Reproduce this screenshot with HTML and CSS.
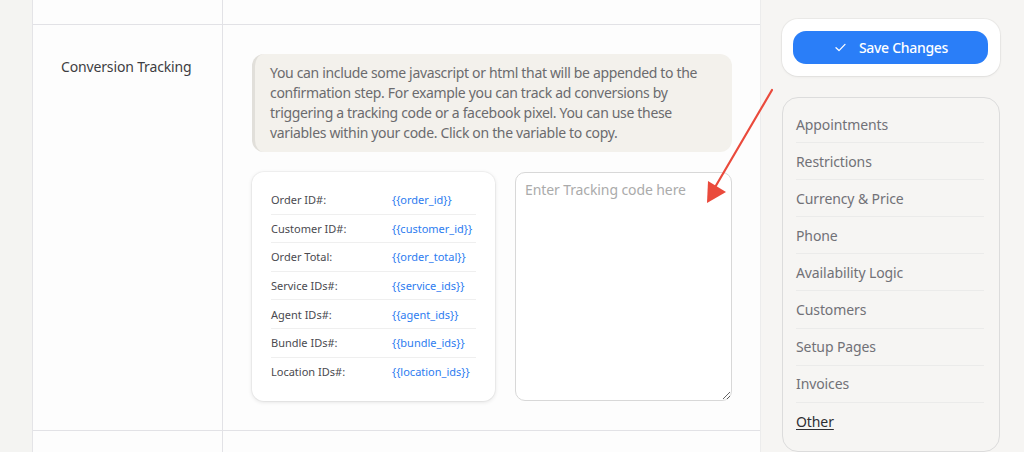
FILE: index.html
```html
<!DOCTYPE html>
<html lang="en">
<head>
<meta charset="utf-8">
<title>Settings - Other</title>
<link rel="stylesheet" href="styles.css">
</head>
<body>
<div class="page">
  <div class="strip"></div>
  <main class="main">
    <div class="cell cell-label row-top"></div>
    <div class="cell cell-content row-top"></div>

    <div class="cell cell-label">
      <div class="label">Conversion Tracking</div>
    </div>
    <div class="cell cell-content content-main">
      <div class="info">You can include some javascript or html that will be appended to the confirmation step. For example you can track ad conversions by triggering a tracking code or a facebook pixel. You can use these variables within your code. Click on the variable to copy.</div>
      <div class="tracking">
        <div class="vars">
          <div class="var-row"><span class="var-name">Order ID#:</span><span class="var-code">{{order_id}}</span></div>
          <div class="var-row"><span class="var-name">Customer ID#:</span><span class="var-code">{{customer_id}}</span></div>
          <div class="var-row"><span class="var-name">Order Total:</span><span class="var-code">{{order_total}}</span></div>
          <div class="var-row"><span class="var-name">Service IDs#:</span><span class="var-code">{{service_ids}}</span></div>
          <div class="var-row"><span class="var-name">Agent IDs#:</span><span class="var-code">{{agent_ids}}</span></div>
          <div class="var-row"><span class="var-name">Bundle IDs#:</span><span class="var-code">{{bundle_ids}}</span></div>
          <div class="var-row"><span class="var-name">Location IDs#:</span><span class="var-code">{{location_ids}}</span></div>
        </div>
        <textarea class="code-input" placeholder="Enter Tracking code here"></textarea>
      </div>
    </div>

    <div class="cell cell-label row-bottom"></div>
    <div class="cell cell-content row-bottom"></div>
  </main>
  <aside class="side">
    <div class="save-card">
      <button class="save-btn" type="button">
        <svg class="check" width="11" height="9" viewBox="0 0 11 9" aria-hidden="true"><path d="M1 4.8 L4 7.6 L10 1.4" fill="none" stroke="#ffffff" stroke-width="1.3" stroke-linecap="round" stroke-linejoin="round"/></svg>
        <span>Save Changes</span>
      </button>
    </div>
    <nav class="menu">
      <a class="menu-item">Appointments</a>
      <a class="menu-item">Restrictions</a>
      <a class="menu-item">Currency &amp; Price</a>
      <a class="menu-item">Phone</a>
      <a class="menu-item">Availability Logic</a>
      <a class="menu-item">Customers</a>
      <a class="menu-item">Setup Pages</a>
      <a class="menu-item">Invoices</a>
      <a class="menu-item active">Other</a>
    </nav>
  </aside>
</div>
<svg class="annot" width="1024" height="452" viewBox="0 0 1024 452" aria-hidden="true">
  <line x1="772" y1="90" x2="714" y2="189" stroke="#ea4a3c" stroke-width="2.2" stroke-linecap="round"/>
  <polygon points="707,203 708,181 726,192" fill="#ea4a3c"/>
</svg>
</body>
</html>
```
FILE: styles.css
```css
* { box-sizing: border-box; }
html, body { margin: 0; padding: 0; }
body {
  width: 1024px;
  height: 452px;
  overflow: hidden;
  font-family: "Noto Sans", "Open Sans", sans-serif;
  background: #f6f5f3;
  position: relative;
}
.page {
  display: flex;
  height: 452px;
}
.strip {
  width: 32px;
  flex: none;
  background: #f4f4f2;
}
.main {
  width: 729px;
  flex: none;
  background: #fdfdfd;
  border-left: 1px solid #e4e4e7;
  border-right: 1px solid #ececec;
  display: grid;
  grid-template-columns: 190px 1fr;
  grid-template-rows: 25px 406px 1fr;
}
.cell { border-bottom: 1px solid #e2e2e6; }
.cell-label { border-right: 1px solid #e2e2e6; }
.row-bottom { border-bottom: none; }
.label {
  padding: 32px 0 0 28px;
  font-size: 14px;
  line-height: 20px;
  color: #3d3d42;
  letter-spacing: -0.15px;
}
.content-main {
  padding: 29px 28px 0 29px;
}
.info {
  background: #f3f1ec;
  border-left: 3px solid #e1dfda;
  border-radius: 12px;
  padding: 9px 12px 9px 15px;
  font-size: 14px;
  line-height: 20px;
  letter-spacing: -0.33px;
  color: #6b6b6e;
}
.tracking {
  display: flex;
  gap: 20px;
  margin-top: 20px;
}
.vars {
  width: 243px;
  height: 229px;
  background: #ffffff;
  border-radius: 12px;
  box-shadow: 0 1px 4px rgba(0,0,0,0.12), 0 0 0 1px rgba(0,0,0,0.03);
  padding: 14px 19px 0 19px;
}
.var-row {
  display: flex;
  align-items: center;
  height: 28.6px;
  border-bottom: 1px solid #efefef;
  font-size: 11px;
}
.var-row:last-child { border-bottom: none; }
.var-name {
  width: 121px;
  color: #4a4a4f;
}
.var-code {
  color: #2d7cf0;
}
.code-input {
  width: 217px;
  height: 229px;
  margin: 0;
  border: 1px solid #d8d8d8;
  border-radius: 10px;
  background: #ffffff;
  padding: 7px 9px;
  font-family: "Noto Sans", "Open Sans", sans-serif;
  font-size: 14px;
  line-height: 20px;
  letter-spacing: -0.1px;
  color: #333;
  resize: vertical;
}
.code-input::placeholder { color: #ababab; }
.side {
  flex: 1;
  padding: 19px 24px 0 21px;
  display: flex;
  flex-direction: column;
  gap: 21px;
}
.save-card {
  background: #ffffff;
  border-radius: 16px;
  box-shadow: 0 0 0 1px rgba(0,0,0,0.04), 0 1px 3px rgba(0,0,0,0.06);
  padding: 12px 12px 12px 11px;
}
.save-btn {
  width: 100%;
  height: 33px;
  border: none;
  border-radius: 13px;
  background: #2a7ef8;
  color: #ffffff;
  font-family: "Noto Sans", "Open Sans", sans-serif;
  font-size: 14px;
  font-weight: 500;
  letter-spacing: -0.3px;
  display: flex;
  align-items: center;
  justify-content: center;
  gap: 13px;
  padding: 0 0 0 2px;
}
.check { display: block; }
.menu {
  display: flex;
  flex-direction: column;
  border: 1px solid #dcdcdc;
  border-radius: 16px;
  padding: 8px 15px 0 13px;
  height: 360px;
}
.menu-item {
  height: 37.1px;
  flex: none;
  display: flex;
  align-items: center;
  border-bottom: 1px solid #ebebea;
  font-size: 14px;
  letter-spacing: -0.1px;
  color: #717177;
  text-decoration: none;
}
.menu-item:last-child { border-bottom: none; }
.menu-item.active {
  color: #2f2f33;
  text-decoration: underline;
  text-underline-offset: 2px;
}
.annot {
  position: absolute;
  left: 0;
  top: 0;
  pointer-events: none;
}
```
